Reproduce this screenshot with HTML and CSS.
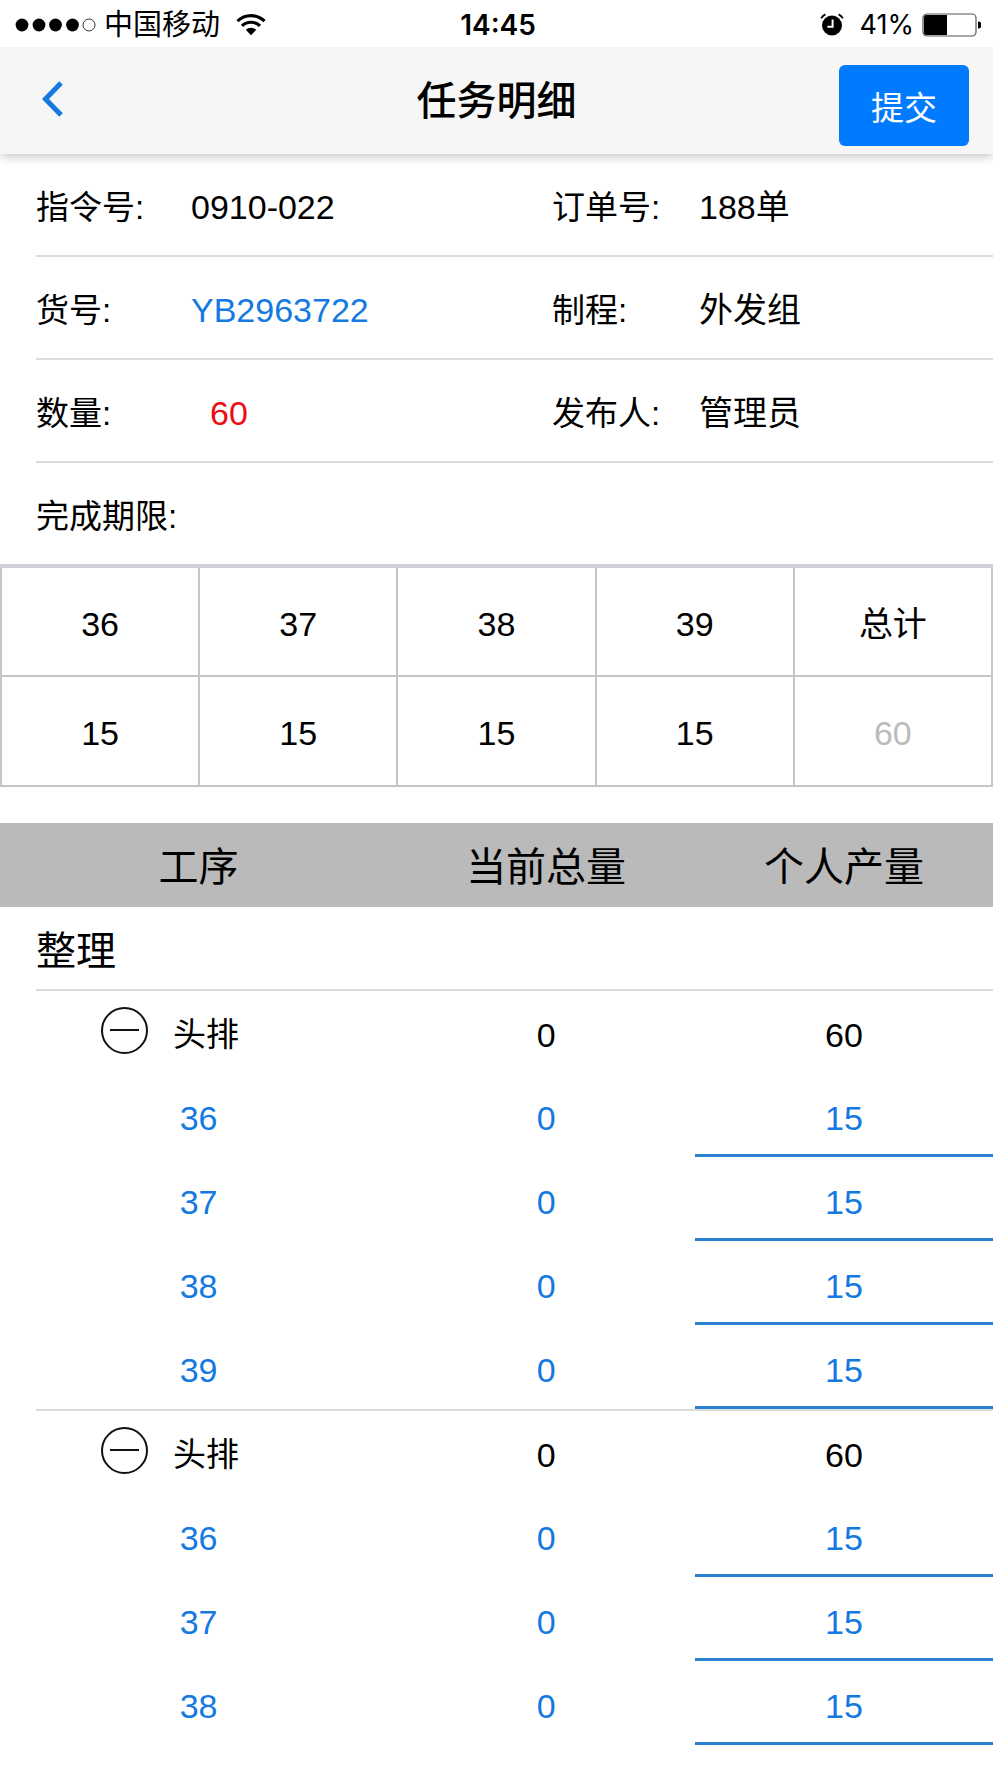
FILE: index.html
```html
<!DOCTYPE html>
<html lang="zh-CN">
<head>
  <meta charset="UTF-8">
  <meta name="viewport" content="width=device-width, initial-scale=1.0">
  <title>任务明细</title>
  <link rel="stylesheet" href="styles.css">
</head>
<body>
  <div class="status-bar">
    <div class="status-left">
      <svg class="signal" width="81" height="14" viewBox="0 0 81 14">
        <circle cx="7" cy="7" r="6.4"/>
        <circle cx="24" cy="7" r="6.4"/>
        <circle cx="40.5" cy="7" r="6.4"/>
        <circle cx="57.5" cy="7" r="6.4"/>
        <circle cx="74" cy="7" r="6" fill="#fff" stroke="#000" stroke-width="0.8"/>
      </svg>
      <span class="carrier">中国移动</span>
      <svg class="wifi" width="30" height="22" viewBox="0 0 30 22">
        <path d="M1.5 7.2a19.2 19.2 0 0 1 27 0M6 11.9a12.9 12.9 0 0 1 18 0" fill="none" stroke="#000" stroke-width="3.2"/>
        <path d="M9.8 15.8a7.4 7.4 0 0 1 10.4 0L15 21.3z"/>
      </svg>
    </div>
    <span class="clock">14:45</span>
    <div class="status-right">
      <svg width="24" height="23" viewBox="0 0 24 23">
        <circle cx="12" cy="12.5" r="10"/>
        <path d="M1.2 5.2A10 10 0 0 1 5.4 1.4M18.6 1.4a10 10 0 0 1 4.2 3.8" fill="none" stroke="#000" stroke-width="1.8"/>
        <path d="M12.6 6.5v7.3H7.4" fill="none" stroke="#fff" stroke-width="2"/>
      </svg>
      <span class="percent">41%</span>
      <svg width="59" height="24" viewBox="0 0 59 24">
        <rect x="1" y="1" width="53" height="22" rx="4" fill="#fff" stroke="#555" stroke-width="1.2"/>
        <path d="M4.5 2H25v20H4.5A2.5 2.5 0 0 1 2 19.5v-15A2.5 2.5 0 0 1 4.5 2z"/>
        <path d="M56 8.5a3.5 3.5 0 0 1 0 7z"/>
      </svg>
    </div>
  </div>

  <header class="nav-bar">
    <button class="back" type="button" aria-label="返回">
      <svg width="24" height="38" viewBox="0 0 24 38">
        <path d="M20 3L4.500 19 20 35" fill="none" stroke="#1579e2" stroke-width="5"/>
      </svg>
    </button>
    <h1>任务明细</h1>
    <button class="submit" type="button">提交</button>
  </header>

  <dl class="info">
    <div class="info-row">
      <dt>指令号:</dt><dd>0910-022</dd>
      <dt>订单号:</dt><dd>188单</dd>
    </div>
    <div class="info-row">
      <dt>货号:</dt><dd><a href="#">YB2963722</a></dd>
      <dt>制程:</dt><dd>外发组</dd>
    </div>
    <div class="info-row">
      <dt>数量:</dt><dd class="amount">60</dd>
      <dt>发布人:</dt><dd>管理员</dd>
    </div>
    <div class="info-row">
      <dt>完成期限:</dt>
    </div>
  </dl>

  <table class="sizes">
    <thead>
      <tr><th>36</th><th>37</th><th>38</th><th>39</th><th>总计</th></tr>
    </thead>
    <tbody>
      <tr><td>15</td><td>15</td><td>15</td><td>15</td><td class="total">60</td></tr>
    </tbody>
  </table>

  <table class="process">
    <thead>
      <tr><th>工序</th><th>当前总量</th><th>个人产量</th></tr>
    </thead>
    <tbody class="line">
      <tr class="category"><th colspan="3">整理</th></tr>
    </tbody>
    <tbody class="line">
      <tr class="group">
        <td class="name">
          <button class="toggle" type="button" aria-label="收起"></button>
          <span>头排</span>
        </td>
        <td>0</td>
        <td>60</td>
      </tr>
      <tr class="size"><td>36</td><td>0</td><td><input type="text" aria-label="36 个人产量" value="15"></td></tr>
      <tr class="size"><td>37</td><td>0</td><td><input type="text" aria-label="37 个人产量" value="15"></td></tr>
      <tr class="size"><td>38</td><td>0</td><td><input type="text" aria-label="38 个人产量" value="15"></td></tr>
      <tr class="size"><td>39</td><td>0</td><td><input type="text" aria-label="39 个人产量" value="15"></td></tr>
    </tbody>
    <tbody>
      <tr class="group">
        <td class="name">
          <button class="toggle" type="button" aria-label="收起"></button>
          <span>头排</span>
        </td>
        <td>0</td>
        <td>60</td>
      </tr>
      <tr class="size"><td>36</td><td>0</td><td><input type="text" aria-label="36 个人产量" value="15"></td></tr>
      <tr class="size"><td>37</td><td>0</td><td><input type="text" aria-label="37 个人产量" value="15"></td></tr>
      <tr class="size"><td>38</td><td>0</td><td><input type="text" aria-label="38 个人产量" value="15"></td></tr>
    </tbody>
  </table>
</body>
</html>
```

FILE: styles.css
```css
* {
  box-sizing: border-box;
}
body {
  margin: 0;
  background-color: #fff;
  color: #000;
  font-family: "Liberation Sans", "Noto Sans CJK SC", sans-serif;
  font-size: 34px;
  line-height: 48px;
}
button,
input {
  font-family: inherit;
  border: none;
  padding: 0;
  background: none;
}

/* status bar */
.status-bar {
  position: relative;
  z-index: 1;
  display: grid;
  grid-template-columns: 1fr auto 1fr;
  align-items: center;
  height: 47px;
  padding: 2px 12px 0 15px;
  background-color: #fff;
  font-family: Inter, "Noto Sans CJK SC", sans-serif;
  font-size: 28px;
  line-height: 40px;
}
.status-left,
.status-right {
  display: flex;
  align-items: center;
}
.status-right {
  justify-content: flex-end;
}
.carrier {
  margin: 0 16px 0 8px;
  font-size: 29px;
}
.clock {
  font-weight: 600;
}
.percent {
  margin: 0 8px 0 16px;
  font-size: 27px;
}

/* nav bar */
.nav-bar {
  display: grid;
  grid-template-columns: 1fr auto 1fr;
  align-items: center;
  height: 107px;
  padding: 0 24px;
  background-color: #f6f6f6;
  box-shadow: 0 2px 10px rgba(0, 0, 0, 0.25);
}
.back {
  justify-self: start;
  height: 48px;
  margin-bottom: 4px;
  padding-left: 17px;
  line-height: 0;
}
.nav-bar h1 {
  margin: 0;
  font-size: 40px;
  font-weight: 500;
}
.submit {
  justify-self: end;
  width: 130px;
  height: 81px;
  margin-top: 10px;
  border-radius: 6px;
  background-color: #007aff;
  color: #fff;
  font-size: 33px;
}

/* order info */
.info {
  margin: 0;
  padding-left: 36px;
}
.info-row {
  display: grid;
  grid-template-columns: 155fr 361fr 147fr 294fr;
  align-items: center;
  height: 103px;
  padding-top: 4px;
  border-bottom: 2px solid #dcdcdc;
}
.info-row:last-child {
  height: 101px;
  border-bottom: none;
}
.info-row dt {
  padding-top: 2px;
  font-size: 33px;
  white-space: nowrap;
}
.info-row dd {
  margin: 0;
}
.info-row a {
  color: #1579e2;
  text-decoration: none;
}
.info-row .amount {
  padding-left: 19px;
  color: #ec0c14;
}

/* size totals */
.sizes {
  width: 100%;
  table-layout: fixed;
  border-collapse: collapse;
  border-top: 4px solid #d0d0d8;
  margin-bottom: 36px;
}
.sizes th,
.sizes td {
  height: 110px;
  padding: 4px 0 0;
  border: 2px solid #c6c6c8;
  text-align: center;
  font-weight: normal;
}
.sizes thead th {
  border-top: none;
}
.sizes .total {
  color: #bbb;
}

/* process list */
.process,
.process thead,
.process tbody {
  display: block;
}
.process tr {
  display: grid;
  grid-template-columns: 40% 30% 30%;
  align-items: center;
  text-align: center;
}
.process th {
  padding: 4px 0 0;
  font-size: 40px;
  font-weight: normal;
}
.process td {
  padding: 6px 0 0;
}
.process thead tr {
  height: 84px;
  background-color: #bababa;
}
.process .line {
  padding-bottom: 2px;
  background: linear-gradient(#dcdcdc, #dcdcdc) 36px 100% / 100% 2px no-repeat;
}
.process .category {
  display: block;
  height: 82px;
  padding: 16px 0 0 36px;
  text-align: left;
}
.process .category th {
  display: block;
}
.process .group {
  height: 82px;
}
.process .name {
  display: flex;
  align-items: center;
  padding-left: 101px;
}
.process .name span {
  margin-left: 25px;
  font-size: 33px;
}
.toggle {
  display: flex;
  align-items: center;
  justify-content: center;
  width: 47px;
  height: 47px;
  margin-bottom: 10px;
  border: 2px solid #111;
  border-radius: 50%;
}
.toggle::before {
  content: "";
  width: 29px;
  height: 2px;
  background-color: #111;
}
.process .size {
  height: 84px;
  color: #1579e2;
}
.process .size td:last-child {
  padding: 0;
}
.process input {
  display: block;
  width: 100%;
  height: 84px;
  padding-top: 10px;
  border-bottom: 3px solid #2a80cf;
  color: inherit;
  font-size: 34px;
  text-align: center;
}
```
